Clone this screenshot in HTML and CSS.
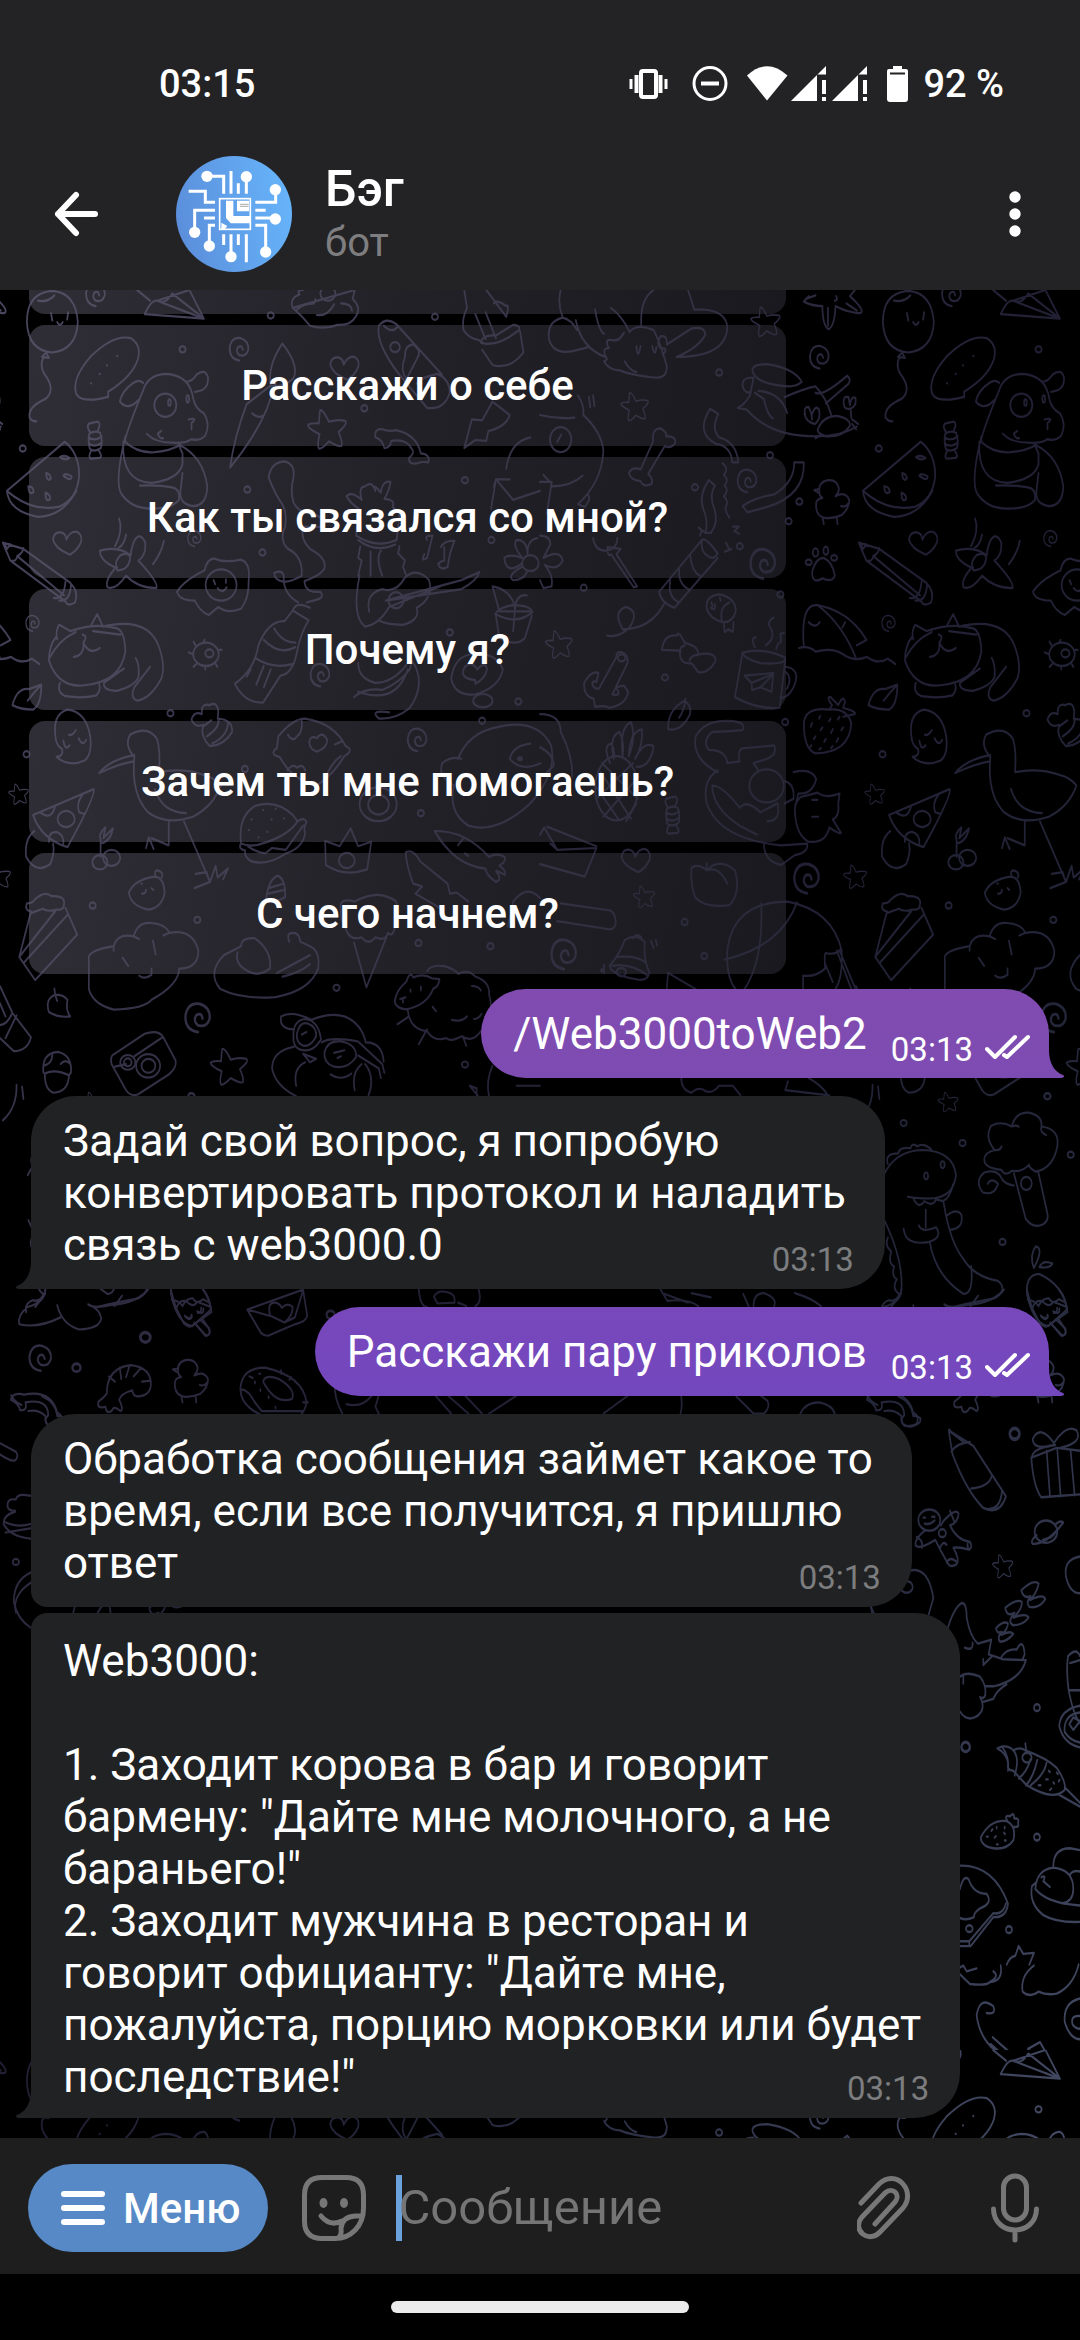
FILE: index.html
```html
<!DOCTYPE html>
<html lang="ru">
<head>
<meta charset="utf-8">
<meta name="viewport" content="width=device-width, initial-scale=1">
<title>Бэг</title>
<link rel="stylesheet" href="styles.css">
</head>
<body>
<div class="app">
  <header class="top">
    <div class="status">
      <span class="clock">03:15</span>
      <svg class="status-icons" width="286" height="40" viewBox="0 0 286 40" aria-hidden="true">
        <g fill="none" stroke="#fff">
          <rect x="12" y="7" width="15" height="26" rx="2" stroke-width="4"/>
          <path d="M7.500 11v18M31.500 11v18" stroke-width="4"/>
          <path d="M2 15v10M37 15v10" stroke-width="3"/>
          <circle cx="81" cy="19.500" r="16" stroke-width="3"/>
          <path d="M72 19.500h18" stroke-width="4"/>
        </g>
        <g fill="#fff">
          <path d="M118 11.500Q138-7 158.500 11.500L138 36.500Z"/>
          <path d="M162 37L197 2v8.500h-9V37ZM193 16h4v14h-4ZM193 33h4v4h-4Z"/>
          <path d="M203 37L238 2v8.500h-9V37ZM234 16h4v14h-4ZM234 33h4v4h-4Z"/>
          <path d="M264 2h9v3h4q2 0 2 2v28q0 3-3 3h-15q-3 0-3-3V7q0-2 2-2h4Z"/>
        </g>
        <path d="M261 9.500h15" stroke="#232325" stroke-width="2"/>
      </svg>
      <span class="battery">92 %</span>
    </div>
    <div class="toolbar">
      <button class="icon-button" aria-label="Назад">
        <svg width="46" height="46" viewBox="0 0 46 46"><path d="M4 23H41M22 4L4 23L22 42" fill="none" stroke="#fff" stroke-width="6" stroke-linecap="round" stroke-linejoin="round"/></svg>
      </button>
      <svg class="avatar" width="116" height="116" viewBox="0 0 348 348" aria-hidden="true">
        <defs><linearGradient id="face" x1="0" y1="0.600" x2="1" y2="0.400"><stop offset="0" stop-color="#5b8edb"/><stop offset="1" stop-color="#66b4fa"/></linearGradient></defs>
        <circle cx="174" cy="174" r="174" fill="url(#face)"/>
        <g fill="none" stroke="#fff" stroke-width="9">
          <path d="M93 61h50v52M165 45v68M187 82v31M211 61v52M38 106h50v33h29M117 163H56v66M84 186h33M117 208H100v64M238 139h61v-37M238 163h31M238 186h60M238 208h31v80M143 235v32M165 235v67M187 235v32M211 235v84"/>
          <rect x="131" y="128" width="92" height="92" stroke-width="5"/>
        </g>
        <g fill="#fff">
          <circle cx="93" cy="61" r="17"/><circle cx="211" cy="62" r="17"/><circle cx="298" cy="101" r="17"/><circle cx="298" cy="189" r="17"/><circle cx="269" cy="288" r="17"/><circle cx="165" cy="302" r="17"/><circle cx="100" cy="270" r="17"/><circle cx="56" cy="229" r="17"/>
          <path d="M150 134h22v46h50v22h-58l-14-16ZM183 134h36v32h-36ZM136 200l18 10-8 10h-10Z"/>
        </g>
        <path d="M192 145h26M192 151h26" stroke="#aaa" stroke-width="3"/>
      </svg>
      <div class="peer">
        <h1 class="peer-name">Бэг</h1>
        <p class="peer-status">бот</p>
      </div>
      <button class="icon-button" aria-label="Ещё">
        <svg width="12" height="46" viewBox="0 0 12 46" fill="#fff"><circle cx="6" cy="6" r="5.700"/><circle cx="6" cy="23" r="5.700"/><circle cx="6" cy="40" r="5.700"/></svg>
      </button>
    </div>
  </header>

  <main class="chat">
    <svg class="wallpaper" width="100%" height="100%" aria-hidden="true">
      <defs>
        <linearGradient id="tint" x1="0" y1="0" x2="1" y2="1">
          <stop offset="0" stop-color="#4a465f"/><stop offset="0.250" stop-color="#363349"/><stop offset="0.500" stop-color="#211f34"/><stop offset="0.700" stop-color="#24263a"/><stop offset="1" stop-color="#444b64"/>
        </linearGradient>
        <ellipse id="o" rx="9" ry="7"/>
        <path id="star" d="M-20-44Q-12-46 5-18Q30-24 52-20Q62-14 33 5Q45 26 42 36Q34 40 5 26Q-16 44-24 42Q-30 36-22 10Q-54-2-56-10Q-50-16-24-14Q-22-40-20-44Z"/>
        <path id="heart" d="M8 26Q-36 12-41-8Q-38-26-18-24Q-4-22-2-8Q8-26 26-26Q46-20 40-2Q30 16 8 26Z"/>
        <path id="swirl" d="M0 28Q-30 24-28-2Q-22-26 4-22Q28-16 26 4Q20 20 0 16Q-12 8-4-2Q8-8 10 4"/>
        <g id="candy"><path d="M-16-8Q-20 10-14 26Q0 34 18 24Q24 10 16-10Q0-16-16-8ZM-18 0Q0 10 20-2M-17 14Q0 24 20 12M-12-10Q-24-22-18-30Q-4-34 2-34Q14-38 14-26L8-12M-10 30Q-20 44-12 48L14 46Q24 44 12 30"/></g>
        <g id="duck"><path d="M-35-22Q-38-44-10-48Q16-50 22-30Q22-20 12-12Q40-24 52-4Q52 16 30 30Q0 40-24 36Q-48 28-44 2Q-40-8-26-8Q-36-14-35-22ZM-35-28L-50-26L-34-18M28 10Q40 14 50 4M-26 34L-22 50M16 36L18 50"/></g>
        <g id="doodles" fill="none" stroke="#fff" stroke-width="5" stroke-linecap="round" stroke-linejoin="round">
          <g transform="scale(0.3444 0.4464)">
            <path d="M152 2Q78 6 78 72Q82 136 152 140Q222 134 226 72Q220 6 152 2ZM110 24Q140 28 158 12M148 52L152 68M198 50L195 66M166 72Q174 84 182 72M134 140L122 150L142 152ZM126 152Q112 172 136 196Q160 226 132 244Q80 262 86 286Q94 296 106 294"/>
            <path d="M310 240Q240 254 222 234Q206 200 262 150Q330 98 380 108Q412 124 400 156Q384 194 314 228L314 240Z"/>
            <path d="M340 148h1M310 169h1M289 188h1M264 209h1"/>
            <path d="M420 54Q440 20 456 24L592 64ZM456 24L550 0L592 64M456 24Q480 34 500 8L592 64M398 0L436 24"/>
            <path d="M416 224Q360 330 364 340Q392 362 440 364Q500 360 524 346M416 224Q430 190 480 188Q552 190 562 246Q568 266 592 276Q612 300 596 326Q580 340 556 334Q540 344 500 342Q450 342 426 322M416 208Q402 198 384 210Q354 226 348 250Q372 272 402 246M540 206Q560 204 570 190Q596 174 604 196Q606 226 566 228M364 328Q332 430 352 456Q380 490 440 490Q500 490 520 470Q524 446 500 442Q460 436 406 438M358 340Q352 430 440 432Q520 424 530 390V366L518 346Q590 372 602 440Q600 484 560 484Q520 480 524 450L530 410M548 290Q566 286 564 292L556 298V312M468 316L458 322Q464 334 474 332"/>
            <ellipse cx="480" cy="258" rx="32" ry="26"/><ellipse cx="492" cy="252" rx="4" ry="7"/><ellipse cx="545" cy="244" rx="4" ry="8"/>
            <use href="#candy" x="275" y="330"/>
            <path d="M20 450L188 340Q230 366 230 416Q224 470 170 486Q100 496 40 462ZM20 450Q26 496 110 508Q180 508 222 450"/>
            <path d="M174 374Q188 368 202 376Q190 384 174 374ZM184 416Q190 408 208 418Q208 430 184 416ZM134 410Q146 412 148 422Q136 432 134 410ZM82 440Q96 440 98 452Q84 462 82 440ZM132 454Q146 458 146 468Q132 478 132 454Z"/>
            <path d="M8 566L30 606L190 698Q196 710 218 700Q230 676 204 656L68 580ZM30 606Q48 610 50 596Q66 590 68 578M50 596L186 684M156 690Q186 694 190 654M172 696Q204 698 206 660M14 568L20 580L30 570Z"/>
            <path d="M346 512Q358 540 334 574M366 548Q360 572 344 578M476 562Q468 590 444 614M380 594Q340 572 290 584Q290 606 336 622Q304 650 312 666Q334 674 366 640Q400 668 454 668Q462 656 402 606Q424 596 422 566Q406 540 390 562Q380 580 380 594ZM340 622Q330 610 350 594Q376 586 378 600Q374 628 340 628Z"/>
            <path d="M164 776Q142 796 142 830Q168 890 240 886Q350 880 364 810Q362 764 340 758Q280 744 204 764L172 750Q160 764 166 782ZM264 752L282 726L298 752M144 824Q170 784 220 766M174 880Q164 902 190 910Q240 916 280 908Q294 896 288 884M298 754Q430 730 462 800Q480 840 470 868Q440 914 400 920Q376 916 390 890L436 844M350 772L270 764M302 880Q298 898 340 898Q390 888 402 868Q406 840 394 824M302 880L360 848M240 772Q256 776 242 790Q260 820 290 802M242 790Q246 818 214 822"/>
            <path d="M514 676Q530 656 570 638L594 628Q602 600 624 602Q650 612 700 604Q728 612 722 650Q724 690 700 714Q660 726 634 710L606 728Q580 720 566 696Q520 696 514 676Z"/>
            <ellipse cx="642" cy="661" rx="45" ry="35"/><path d="M620 650l5 9M656 648v8M632 668Q646 682 658 666"/>
            <path d="M780 420Q786 386 826 384Q858 390 852 420Q842 450 852 476Q866 498 900 500Q944 506 932 530Q900 532 880 530Q870 556 900 580Q950 600 942 624Q930 640 884 652Q886 680 930 676Q946 690 910 696L890 700M780 420Q800 460 820 480Q834 500 828 530Q810 560 836 580Q880 596 876 640Q850 652 826 654Q796 650 796 634Q820 626 824 640Q820 680 866 700"/>
            <path d="M850 718L896 740Q872 770 862 812Q850 860 814 864L764 924Q710 926 682 882Q740 850 750 796Q780 740 826 742L850 718Q860 696 900 712M796 758Q820 790 858 790M766 784Q810 820 858 800M740 824Q790 850 848 838M728 850L716 866M766 842L744 884M786 850L766 890"/>
            <ellipse cx="598" cy="816" rx="37" ry="26"/><ellipse cx="608" cy="814" rx="12" ry="9"/><path d="M560 816L548 812M570 838l-8 6M596 842v8M625 836l6 8M636 806h8M568 796l-6-8M590 790l4-6"/>
            <path d="M820 120Q870 170 852 198Q820 220 786 214Q776 170 820 120ZM786 214L716 256Q680 330 668 398Q740 330 774 268L800 210M732 276Q750 288 762 282"/>
            <path d="M1100 80Q1120 60 1150 76L1284 190M1100 80Q1090 120 1160 190L1240 264Q1290 270 1306 230Q1306 200 1270 188Q1220 196 1210 210M1114 80Q1140 100 1156 80M1176 150Q1174 124 1200 122Q1226 136 1212 152L1180 200Q1160 180 1176 150Z"/><ellipse cx="1147" cy="128" rx="14" ry="11"/>
            <path d="M1348 354L1370 290L1400 292L1430 250L1480 280Q1470 306 1418 316L1412 338L1380 336Z"/>
            <path d="M1090 330Q1086 310 1110 312Q1130 318 1150 314Q1210 324 1222 366Q1250 368 1244 386Q1220 384 1214 388Q1184 392 1188 376Q1206 364 1196 356Q1180 332 1136 338Q1134 354 1116 354Q1110 334 1090 330Z"/>
            <path d="M850 40Q840 18 870 10Q860 0 880 0M1030 0L1024 20Q1050 40 1034 58Q1020 80 980 78Q940 90 900 80Q880 60 850 40ZM862 44Q880 30 912 30L916 20M990 30Q1020 30 1022 46M920 56Q950 60 970 32"/><ellipse cx="952" cy="8" rx="22" ry="16"/>
            <path d="M1348 0L1356 40Q1340 66 1346 90Q1360 108 1390 112L1406 120M1412 0L1470 60Q1480 30 1470 36Q1440 20 1434 30M1380 54L1410 110M1410 50L1440 108M1396 118Q1440 130 1504 92Q1516 80 1490 78L1440 102Q1400 100 1396 118ZM1400 134L1430 168Q1480 180 1520 140L1510 92"/>
            <path d="M1034 550L1042 490Q1020 480 1006 462Q1020 450 1050 470Q1040 440 1060 440Q1080 426 1090 450Q1080 430 1106 454Q1110 426 1134 430Q1130 450 1116 468Q1150 470 1140 486L1160 500L1152 560Q1090 580 1034 550ZM1040 560Q1090 590 1148 570M1046 575L1040 600L1050 606L1040 640M1160 574L1156 590L1176 606L1170 620L1180 640M1076 586V640M1106 584Q1090 600 1110 640M1044 640Q1020 730 1060 754Q1100 750 1130 710L1290 660M1072 720Q1060 680 1110 670Q1150 680 1176 644Q1210 620 1246 650Q1260 690 1210 712Q1220 740 1170 750Q1120 750 1100 740M1120 696L1340 650L1392 632Q1386 650 1340 670Z"/><ellipse cx="1150" cy="695" rx="22" ry="18"/>
            <path d="M1240 560Q1230 550 1256 550L1240 600Q1220 610 1232 592M1280 576Q1290 560 1320 562Q1304 590 1300 620Q1280 630 1272 614Q1280 606 1290 606L1290 576"/>
            <path d="M1028 912Q1060 890 1110 896Q1160 880 1190 850L1196 830Q1240 880 1190 936Q1150 962 1100 960Q1070 940 1130 946M1040 900Q1150 930 1184 850M1040 836Q1040 870 1090 880Q1140 880 1180 840"/>
            <path d="M1310 870Q1320 820 1370 816Q1440 810 1460 850Q1450 890 1380 906Q1320 910 1310 870ZM1380 874Q1330 870 1350 844Q1370 830 1386 850Q1410 830 1414 850Q1410 870 1380 882Z"/><ellipse cx="1402" cy="920" rx="28" ry="15"/>
            <path d="M162 1006Q150 950 196 940Q250 944 262 1000Q268 1040 246 1054Q200 1070 164 1046Q186 1044 180 1028Q164 1020 162 1006ZM184 1010Q190 1034 202 1020M228 1004Q240 1024 250 1008M200 996Q210 1000 220 986"/>
            <path d="M36 930Q50 890 84 894L120 884Q120 930 96 940Q60 940 36 930ZM80 920Q100 900 120 884"/>
            <path d="M390 1046Q360 1020 378 996Q430 974 456 1006Q466 1030 462 1080Q530 1070 590 1086Q620 1090 640 1110Q620 1156 560 1180Q480 1200 430 1170Q380 1130 390 1046ZM390 1042Q320 1052 288 1082Q350 1060 388 1056M450 1118Q470 1170 540 1172M490 1190V1244L440 1228M446 1252L432 1226L424 1250M534 1190L610 1326L564 1340M610 1326L626 1290L632 1316L662 1296L648 1320M606 1320L600 1304L568 1308"/>
            <path d="M556 962Q564 942 586 950Q584 924 608 930Q630 920 634 944L632 960Q676 962 674 990Q650 1020 610 1022Q580 1000 590 974Q566 982 556 962ZM590 978L614 964M600 1000Q640 980 634 960M616 1016Q660 1000 662 970"/>
            <path d="M808 1000Q850 960 886 960Q970 970 1004 1022Q1030 1030 1000 1044Q970 1084 920 1110Q850 1100 812 1046Q780 1040 804 1026ZM836 996Q850 1014 862 1000Q880 990 876 964M972 1018L996 1010M990 1044Q960 1060 944 1096M834 1076Q850 1060 862 1070Q880 1060 886 1076"/><path d="M898 1014Q900 996 920 1004Q936 986 950 1008Q950 1026 920 1034Q900 1030 898 1014Z"/>
            <path d="M96 1176L272 1118Q280 1130 196 1248Q120 1230 96 1176ZM116 1170Q150 1190 160 1156M240 1130Q220 1150 230 1170L246 1174M100 1212Q70 1230 76 1270Q104 1310 146 1286Q160 1260 154 1240M142 1236Q140 1214 164 1214Q186 1220 184 1240"/><ellipse cx="192" cy="1185" rx="25" ry="18"/>
            <path d="M292 1270V1230M292 1230Q284 1220 306 1204L300 1228L328 1206Q320 1236 292 1240"/><ellipse cx="290" cy="1282" rx="22" ry="16"/><ellipse cx="324" cy="1272" rx="25" ry="18"/>
            <path d="M700 1240Q690 1180 740 1156Q800 1140 850 1176L864 1190Q840 1220 770 1238Q730 1250 700 1240ZM864 1190Q884 1180 890 1192Q880 1206 886 1216Q880 1250 830 1262Q780 1290 730 1280Q708 1270 712 1256Q690 1252 700 1240M720 1246Q740 1258 770 1262L790 1250L830 1254L880 1200"/><path d="M764 1165h1M800 1162h1M730 1186h1M788 1186h1M824 1184h1M722 1210h1M776 1214h1M750 1226h1"/>
            <path d="M374 1350Q390 1320 450 1314Q476 1316 478 1350Q470 1384 430 1388Q380 1380 374 1350ZM452 1314Q446 1300 458 1300Q476 1304 470 1316M410 1330h2M440 1340l5 4M412 1352Q422 1354 424 1344"/>
            <path d="M946 1288L944 1234L986 1246L1018 1206L1040 1246L1078 1236L1066 1298Q1000 1316 946 1288Z"/><ellipse cx="1007" cy="1278" rx="23" ry="17"/>
            <path d="M56 1494L90 1392Q70 1390 78 1374Q96 1374 100 1366Q130 1344 150 1358Q190 1356 186 1376Q186 1390 164 1388Q140 1394 124 1386L90 1396M56 1494L102 1546L224 1444L190 1384M56 1494L160 1392M70 1506L196 1400"/>
            <path d="M258 1566V1500Q250 1480 330 1470Q340 1440 388 1448Q400 1414 440 1418Q480 1420 492 1440Q560 1430 576 1480Q576 1520 520 1520Q520 1556 440 1590Q420 1610 330 1612Q270 1600 258 1566ZM330 1470V1480M388 1448L404 1454M444 1458L452 1488M356 1496L372 1514M492 1440L474 1446M404 1536Q420 1546 440 1534V1520"/>
            <path d="M1178 1260Q1200 1250 1220 1280L1300 1330L1306 1352L1326 1350L1360 1370M1178 1260Q1180 1290 1200 1330L1226 1336L1206 1352L1290 1390"/>
            <path d="M1262 1212Q1350 1210 1420 1270Q1440 1260 1466 1270Q1470 1280 1450 1290Q1470 1300 1466 1310Q1440 1300 1440 1302Q1460 1320 1440 1326Q1410 1310 1410 1296Q1320 1290 1262 1212ZM1330 1244L1344 1230M1360 1268L1350 1262"/>
            <path d="M1330 1050Q1360 990 1450 978Q1560 960 1600 1020Q1620 1080 1540 1150Q1440 1220 1360 1200Q1300 1170 1318 1110Q1270 1090 1284 1060Q1310 1044 1340 1050M1480 1050Q1490 1020 1540 1016M1480 1050Q1510 1080 1570 1060"/><ellipse cx="1510" cy="1050" rx="6" ry="3"/>
            <ellipse cx="1098" cy="1152" rx="54" ry="38"/><ellipse cx="1099" cy="1153" rx="30" ry="22"/>
            <path d="M772 1366Q780 1320 806 1312Q830 1320 828 1360Q800 1374 772 1366ZM780 1340L822 1330M778 1352L826 1344"/>
            <path d="M990 1390Q980 1360 1030 1370Q1100 1340 1150 1370Q1160 1390 1146 1430Q1140 1450 1126 1440Q1120 1460 1090 1450Q1070 1470 1050 1450Q1010 1460 1000 1420Q986 1410 990 1390ZM1028 1462L1064 1562L1122 1450"/>
            <path d="M840 1460Q830 1440 850 1440Q870 1440 872 1460L900 1470Q930 1480 924 1520Q900 1570 800 1584Q700 1590 640 1566Q600 1530 650 1490L700 1470Q700 1450 740 1452Q790 1480 784 1520Q750 1540 720 1526Q680 1510 690 1484M804 1530L900 1490M820 1538Q870 1530 900 1510"/>
            <path d="M1474 1426Q1490 1380 1490 1370Q1530 1330 1568 1362M1434 440L1440 424H1480M1426 490L1440 424L1490 470L1568 450M1470 400Q1480 340 1540 330M1430 664L1450 720H1540M1430 664Q1480 670 1496 710L1490 764M1494 714Q1500 680 1530 684M1438 726Q1450 710 1490 706Q1540 706 1546 722Q1500 752 1438 726ZM1440 730L1450 780Q1500 800 1524 780L1544 730"/>
            <ellipse cx="1540" cy="612" rx="24" ry="18"/><path d="M1516 612Q1470 640 1464 600Q1480 590 1516 600Q1486 570 1500 560Q1530 560 1532 592Q1530 560 1560 556M1516 620Q1470 640 1490 650Q1520 650 1530 632"/>
            <use href="#star" transform="translate(950 313)"/><use href="#star" transform="translate(54 1130) scale(0.520)"/>
            <use href="#heart" x="1000" y="175"/><use href="#heart" x="195" y="567"/>
            <use href="#swirl" x="278" y="8"/><use href="#swirl" x="695" y="130"/><use href="#swirl" transform="translate(95 745) scale(0.700)"/><use href="#swirl" transform="translate(565 555) scale(0.700)"/><use href="#swirl" x="930" y="860"/><use href="#swirl" x="1212" y="1005"/>
            <use href="#o" x="530" y="133"/><use href="#o" x="718" y="447"/><use href="#o" x="762" y="588"/><use href="#o" x="1058" y="265"/><use href="#o" x="786" y="57"/><use href="#o" x="1263" y="60"/><use href="#o" x="1350" y="426"/><use href="#o" x="1427" y="560"/><use href="#o" x="1306" y="767"/><use href="#o" x="495" y="948"/><use href="#o" x="77" y="1040"/><use href="#o" x="66" y="355"/><use href="#o" x="711" y="1073"/><use href="#o" x="1400" y="965"/><use href="#o" x="1505" y="922"/><use href="#o" x="1222" y="1172"/><use href="#o" x="269" y="1379"/><use href="#o" x="573" y="1411"/><use href="#o" x="1215" y="1463"/><use href="#o" x="1424" y="1470"/>
          </g>
          <g transform="translate(540) scale(0.3444 0.4464)">
            <path d="M60 0Q50 30 66 62Q20 70 26 110Q40 150 110 134L140 128M66 62Q90 66 108 90M104 68Q120 130 190 150M160 44Q170 90 186 98M206 40Q240 60 260 94Q280 74 330 90Q350 120 368 170Q370 200 330 196Q260 190 232 180Q200 180 186 160Q200 156 190 148Q180 130 200 130Q186 110 206 112Q220 114 230 110L244 96M294 78Q290 20 330 0M430 0L448 44Q540 40 544 84Q540 150 396 150Q460 130 480 100Q478 80 440 86L368 122Q370 100 350 104Q336 120 350 130Q376 130 356 144M280 126Q284 160 292 126M326 126Q334 154 338 128M246 160Q260 180 280 184"/>
            <ellipse cx="60" cy="335" rx="31" ry="28"/><path d="M50 340l12-16M0 280Q50 290 100 286M110 236Q130 260 126 280Q180 320 184 360Q180 430 110 480L130 486Q150 466 140 460M0 430L34 430L20 500M34 440Q90 440 124 416M10 414L28 430M142 240L146 262M154 236L158 260"/>
            <path d="M328 340Q324 310 350 310Q370 318 366 328Q396 326 392 344Q380 356 362 350L314 412Q330 424 324 434Q300 444 292 428Q264 426 258 410Q268 394 292 402Z"/>
            <path d="M494 266L518 278Q496 310 520 330Q570 340 576 386H558Q556 350 510 344Q450 320 494 266ZM530 388Q550 400 534 414Q550 426 536 438Q550 450 534 462Q550 474 538 488Q540 500 550 510"/>
            <path d="M738 386H766Q770 460 660 486L602 498L588 484Q620 466 680 458Q740 430 738 386ZM490 426L508 438Q490 460 506 490Q520 520 496 544H480Q490 520 474 490Q460 460 490 426ZM460 532L480 544M464 550L470 538M560 530L578 530L564 540L578 546M540 566L550 582L536 586L556 580"/>
            <path d="M470 560Q480 552 516 590Q510 600 498 600Q464 590 470 560ZM470 560L346 676Q350 700 390 712L516 600M436 594Q440 630 464 640M404 624Q400 660 436 672M378 650Q370 690 406 700M360 704Q320 760 240 760Q210 720 250 710Q290 720 260 756Q230 780 194 774"/>
            <path d="M154 556Q160 584 190 584Q226 580 224 556M196 576L234 580L222 592L282 664L272 666L206 592Q196 600 196 576ZM0 550Q30 550 30 570L10 600Q60 580 66 606Q50 630 14 616Q40 640 34 664L10 668L0 650"/>
            <path d="M484 712Q480 686 520 682Q570 690 568 720Q560 746 530 744Q490 736 484 712ZM550 700Q520 710 528 740M534 746L536 766L548 760L560 766L562 744M498 700l3 8M522 690l3 6M496 712Q510 720 508 704"/>
            <path d="M354 806Q360 770 398 774Q400 760 420 790L434 794Q460 800 460 816Q510 810 510 830Q490 860 460 856L440 836Q404 840 406 808ZM408 812Q404 800 420 796M434 830Q440 816 460 818"/>
            <path d="M222 822Q220 808 240 812Q258 820 254 836L210 906Q230 910 228 900L220 890L244 886L256 900Q250 930 200 936Q190 930 160 934L156 916Q126 910 128 880Q150 850 170 858L164 878Q150 874 152 884Q160 896 172 892Z"/><ellipse cx="237" cy="824" rx="11" ry="8"/>
            <path d="M590 812Q650 800 712 824Q716 840 640 836Q586 824 590 812ZM588 812L566 912Q630 940 696 936L712 830M714 844Q760 850 736 890Q720 914 698 914M714 856Q734 870 716 894M594 864L678 858L672 900L640 890L616 896L614 880ZM614 880L672 862M640 890L676 862M624 800Q610 780 626 778M656 796Q690 776 664 750Q664 740 678 734M686 804Q690 790 700 788L698 770L708 768"/>
            <path d="M372 984Q370 940 420 920Q440 930 436 950Q410 990 372 984ZM404 958Q420 940 422 916M0 950Q60 950 60 990Q94 1040 94 1090M0 1024Q40 1040 40 1066L20 1080"/>
            <ellipse cx="222" cy="1116" rx="62" ry="72"/><path d="M204 1060Q180 1020 208 1016Q220 1040 214 1050Q200 1000 230 990Q246 1010 240 1044Q230 980 264 968Q280 1000 258 1044Q260 990 296 984Q300 1020 276 1050Q300 1010 330 1022Q320 1070 280 1068M176 1080L264 1184M160 1110L230 1188M180 1060L284 1140M270 1060L164 1140M286 1090L184 1180M280 1150L250 1190"/>
            <use href="#candy" x="384" y="1170"/>
            <path d="M516 1080Q440 1050 452 1000Q480 960 560 966Q600 970 588 986Q540 990 500 990Q470 1010 490 1030Q540 1030 544 1060L580 1056Q570 1024 600 1026L680 1020Q690 1040 660 1050L620 1060L636 1078M516 1076Q470 1100 484 1150Q520 1230 700 1244L776 1240Q780 1260 740 1266L700 1288Q650 1280 650 1240M500 1110Q500 1160 580 1200L630 1220M500 1110Q530 1110 580 1160Q600 1140 640 1170L690 1150Q700 1190 660 1190"/><ellipse cx="658" cy="1111" rx="50" ry="37"/>
            <path d="M710 1100Q740 1106 736 1140L710 1150M736 1080Q790 1070 802 1096Q790 1130 750 1128L740 1160Q740 1220 780 1236Q830 1240 840 1204Q870 1220 874 1216L850 1186Q870 1180 866 1150L870 1128Q830 1140 806 1126L756 1136Q740 1150 740 1160M790 1142h16M790 1180h18"/>
            <path d="M440 1294Q460 1284 484 1300Q520 1270 566 1300Q584 1350 550 1378Q480 1386 450 1360Q436 1330 440 1294ZM484 1300Q520 1290 544 1330M484 1284V1296"/>
            <path d="M12 1204L50 1254L164 1250L130 1314L0 1286M20 1202L164 1246M0 1220L12 1204M50 1254L30 1240"/>
            <path d="M60 1374L204 1390Q220 1396 220 1420Q214 1434 200 1432L50 1414M202 1514Q230 1490 246 1456Q280 1440 304 1460Q300 1500 318 1530Q310 1550 280 1544Q210 1536 202 1514ZM210 1514Q260 1506 314 1536M224 1494Q280 1490 306 1506M270 1452Q280 1440 294 1450M322 1458L330 1474M336 1456L340 1468M186 1512V1530M180 1520V1528M176 1524h1"/><ellipse cx="236" cy="1528" rx="14" ry="9"/>
            <path d="M568 1566Q540 1540 544 1480Q560 1370 720 1370Q850 1390 876 1480Q880 1540 858 1566M642 1374Q650 1500 594 1566M746 1372Q700 1470 536 1500M764 1566V1536Q800 1540 828 1520Q824 1480 832 1486Q860 1490 874 1476M828 1510L850 1550M368 1566L372 1530L452 1566M870 1480L916 1566M862 1480L904 1566"/>
            <path d="M780 14L766 26Q790 36 820 36Q820 80 838 88Q856 80 858 36Q890 50 930 52Q946 46 900 14L914 0M772 20L800 12M836 40V80M890 30L920 46M856 24Q866 24 860 14"/>
            <path d="M618 184Q610 166 660 166Q740 176 760 206Q740 220 700 214Q630 208 618 184ZM620 196L610 236M620 196Q580 196 590 220Q600 234 612 228M610 236Q590 260 574 264L600 268Q660 320 760 326Q860 334 920 306M624 230L650 244Q660 280 676 288M634 226Q700 230 718 276M710 240Q770 220 800 216Q830 240 846 280M800 230Q820 240 892 192Q904 200 896 210L830 254"/>
            <path d="M808 310Q820 284 860 282Q900 286 900 304Q880 330 830 328Q800 320 808 310ZM770 278Q764 262 780 262Q790 276 790 290M790 278Q800 256 810 268Q816 290 798 300Q772 296 768 278M882 254Q880 236 896 240L900 258Q904 236 916 242Q920 262 900 266Q882 268 882 254ZM902 266L904 286M906 290L924 300M906 300L918 312M812 326L800 332"/>
            <use href="#duck" x="846" y="474"/>
            <path d="M790 632Q800 600 824 600Q850 610 856 640Q850 656 820 646Q790 660 790 632Z"/><ellipse cx="780" cy="610" rx="9" ry="6"/><ellipse cx="800" cy="588" rx="8" ry="9"/><ellipse cx="830" cy="584" rx="7" ry="9"/><ellipse cx="854" cy="600" rx="9" ry="6"/>
            <path d="M766 800Q756 700 806 706Q900 720 948 784L920 796M806 706Q880 750 918 826M780 744Q800 760 812 744M886 744L878 756M752 802Q780 796 800 810Q850 800 880 816Q910 834 950 822Q980 840 1010 826L1032 838"/>
            <path d="M766 970Q770 934 840 940Q890 936 904 970Q900 1036 800 1038Q766 1030 766 970ZM840 940L848 930Q830 910 844 912L866 930Q880 906 886 922L880 936Q920 944 914 950L880 956"/><path d="M790 970l-4 8M814 954l-4 6M844 960l-5 6M870 956l-5 6M820 980l-5 6M850 984l-5 8M880 980l-5 6M800 1000l-5 6M830 1006l-5 6M866 1004l-5 8M788 1020l-4 5M816 1026l-5 3M850 1022l-5 4"/>
            <use href="#star" transform="translate(275 262) scale(0.720)"/><use href="#star" transform="translate(655 72) scale(0.760)"/><use href="#star" transform="translate(55 795) scale(0.700)"/><use href="#star" transform="translate(302 1360) scale(0.560)"/><use href="#star" transform="translate(915 1315) scale(0.600)"/>
            <use href="#heart" x="278" y="1278"/>
            <use href="#swirl" x="602" y="425"/><use href="#swirl" transform="translate(648 610) scale(1.300)"/><use href="#swirl" x="812" y="148"/><use href="#swirl" transform="translate(70 1485) scale(1.300)"/><use href="#swirl" transform="translate(775 1315) scale(1.300)"/>
            <use href="#o" x="520" y="185"/><use href="#o" x="450" y="442"/><use href="#o" x="580" y="574"/><use href="#o" x="127" y="667"/><use href="#o" x="363" y="868"/><use href="#o" x="668" y="370"/><use href="#o" x="722" y="518"/><use href="#o" x="753" y="474"/><use href="#o" x="712" y="968"/><use href="#o" x="698" y="682"/><use href="#o" x="420" y="1416"/><use href="#o" x="477" y="1492"/>
          </g>
          <g transform="translate(0 670) scale(0.3444 0.4337)">
            <path d="M158 66L160 80Q130 90 142 120Q170 134 204 130Q190 116 196 92Q186 80 160 80L166 94M0 60L36 122L90 178Q80 210 40 210L0 180M36 122Q20 150 0 150M48 128L16 180M0 100L16 130"/>
            <path d="M126 260Q120 214 170 212Q210 220 206 260Q200 264 200 270Q196 304 156 306Q130 300 130 262Q160 250 200 266M126 244Q150 240 152 220M176 240Q190 226 204 240M8 370Q50 340 48 288M64 292L68 320"/>
            <path d="M326 220L420 170Q460 160 474 178L510 232Q514 248 490 264L400 310Q380 316 366 300L324 240Q320 228 326 220ZM334 246L366 240M390 222L472 178"/><ellipse cx="371" cy="236" rx="22" ry="17"/><ellipse cx="371" cy="236" rx="11" ry="9"/><ellipse cx="430" cy="244" rx="35" ry="27"/><ellipse cx="431" cy="244" rx="20" ry="16"/>
            <path d="M854 160Q810 160 816 130Q850 116 904 138Q960 120 1000 130Q1050 146 1062 190Q1110 190 1114 234M854 200Q790 210 790 250Q800 290 860 314M886 236Q850 250 860 290M852 176Q850 140 886 136Q926 140 932 184L920 196Q900 214 870 206Q850 200 852 176ZM862 170Q870 142 892 146Q920 154 918 176Q900 204 876 196Q860 190 862 170ZM934 190Q960 176 1040 188L1110 240L1116 260M1040 220L1100 250L1106 272M942 214Q950 184 990 188Q1036 194 1034 224Q1010 252 970 246Q940 238 942 214ZM880 216L918 228L900 236ZM1050 240Q1020 260 1030 300M1060 240Q1090 270 1070 312M960 264Q990 280 1020 262M876 172L890 166M970 214L1000 208M980 226L990 222"/>
            <path d="M1146 96Q1150 70 1180 50Q1190 24 1200 40Q1230 30 1254 42L1276 44Q1274 62 1258 66Q1240 104 1180 114Q1150 112 1146 96ZM1162 90L1178 86M1170 98V92M1192 68v5M1222 62v8M1240 26Q1250 10 1290 14Q1320 20 1330 32Q1360 20 1380 38Q1424 50 1420 80Q1440 130 1390 170Q1370 190 1340 176Q1310 190 1296 180Q1260 190 1240 164Q1190 160 1184 116M1154 148L1184 132M1216 194L1240 160M1344 176L1354 198M1312 138Q1340 144 1356 130M1256 108L1266 118M1370 60Q1390 60 1396 70M1376 136Q1390 136 1398 124"/>
            <path d="M132 760Q130 790 80 800Q50 820 56 840Q110 850 176 824M126 770Q120 786 100 786M98 784Q70 790 76 812M166 796Q180 840 230 852Q290 850 294 826Q290 804 256 794Q270 804 320 796Q400 790 430 760"/>
            <path d="M496 760L510 800L534 838Q550 850 560 842L614 812Q610 780 590 760M502 784Q520 786 530 798Q540 780 560 780Q570 796 590 782L608 790M564 836L596 866Q614 866 608 850L582 830M542 824Q560 830 556 818M574 814Q586 814 584 802"/>
            <path d="M718 806L880 760L892 820Q890 834 856 840L780 866Q770 868 758 860ZM718 806L790 822L826 836L856 824L880 762M784 820Q776 790 796 790Q812 790 818 802Q834 788 850 800Q850 820 826 836"/>
            <path d="M286 1018Q300 1010 310 1000Q310 940 380 934Q440 940 438 980Q436 1004 404 1006Q386 1008 384 992Q350 1000 346 1014Q360 1036 350 1040Q330 1026 326 1038Q310 1050 306 1030Q280 1036 286 1018ZM316 960L334 972M348 940L352 966M376 936L366 962M410 940L388 960M438 970L412 972"/>
            <use href="#duck" x="552" y="970"/>
            <path d="M698 990Q700 940 770 940Q880 960 890 1020Q880 1070 800 1060Q700 1040 698 990ZM764 972Q770 954 810 966Q860 990 848 1012Q800 1026 764 972ZM700 990Q720 990 740 1020L760 1040L880 1040M724 960l10 4M740 972v4M756 990v4M780 1006v4M800 1030v4M816 946v8M840 968l6-6M880 1020h14M752 954h4"/>
            <path d="M32 1014Q36 996 70 1002Q150 990 166 1044Q186 1050 176 1070Q160 1076 140 1074Q124 1060 140 1050Q140 1010 74 1020Q80 1040 58 1038Q56 1024 32 1014ZM0 1114L46 1134Q56 1144 44 1154Q30 1156 0 1140"/>
            <path d="M22 1260Q20 1240 46 1244Q50 1230 76 1234L96 1236M22 1260Q24 1270 44 1270M44 1272Q10 1280 10 1300Q30 1330 90 1334M14 1296Q50 1310 92 1300M16 1320L92 1310M40 1480Q40 1430 90 1412M40 1480Q50 1520 90 1540M1100 1004L1090 1030L1100 1046M972 980Q970 1010 994 1046M1006 1024Q1050 1034 1080 1004M1264 1004L1310 1046M1300 1004L1360 1046M1350 1004L1400 1046M1420 1046L1500 1004"/>
            <path d="M1216 760Q1220 800 1240 800M1260 776Q1270 760 1300 766Q1324 770 1320 790L1270 792ZM1330 790L1354 798M1390 760Q1400 790 1380 798M1364 290L1390 316M1364 290L1384 296V314M1420 314Q1410 280 1430 244M1500 290H1568"/>
            <use href="#star" transform="translate(665 247) scale(0.960)"/><use href="#swirl" transform="translate(575 130) scale(1.300)"/><use href="#swirl" transform="translate(118 915) scale(1.150)"/>
            <use href="#o" x="977" y="64"/><use href="#o" x="1350" y="241"/><use href="#o" transform="translate(422 870) scale(1.600)"/><use href="#o" transform="translate(222 940) scale(1.300)"/><use href="#o" transform="translate(960 818) scale(1.300)"/><use href="#o" x="46" y="1388"/><use href="#o" x="556" y="314"/>
          </g>
          <g transform="translate(540 670) scale(0.3444 0.4337)">
            <path d="M1290 460Q1290 444 1320 438Q1290 410 1310 382Q1340 370 1370 384Q1380 350 1420 352Q1460 360 1456 384Q1510 390 1502 430Q1490 480 1440 488Q1420 480 1420 472Q1400 490 1370 486Q1350 500 1340 484Q1290 480 1290 460ZM1370 384Q1384 380 1390 384M1456 384Q1450 396 1470 404M1320 438Q1336 440 1340 430M1376 492L1410 596Q1430 620 1460 610Q1480 600 1472 580L1446 486M1376 520Q1350 516 1342 506Q1330 480 1290 490Q1260 510 1286 536Q1320 544 1330 516Q1310 500 1300 516"/><ellipse cx="1412" cy="515" rx="16" ry="15"/>
            <path d="M998 496Q1030 440 1110 438Q1200 440 1208 496Q1200 550 1130 550Q1090 550 1068 546M1010 470Q1000 446 1040 446Q1044 430 1076 434Q1080 420 1096 430Q1110 420 1136 436M1084 550Q1100 576 1116 556Q1140 570 1150 552L1170 556Q1190 550 1200 516M1172 560Q1190 650 1230 690Q1260 730 1330 740Q1360 760 1320 780Q1250 790 1200 800M1132 652Q1150 730 1230 770Q1260 770 1252 706M1120 576V616M1100 612Q1110 630 1150 616Q1170 640 1130 650Q1060 660 1056 620M1180 590Q1210 570 1224 588Q1230 620 1190 622M1000 600Q1060 700 1048 770L1020 800M1010 640Q1000 660 1020 672Q1010 700 1028 706Q1020 730 1036 736Q1020 760 1044 770M1272 774L1250 798"/><ellipse cx="1121" cy="498" rx="6" ry="8"/><ellipse cx="1169" cy="472" rx="6" ry="8"/>
            <path d="M1434 710Q1420 680 1440 660Q1464 666 1434 710ZM1450 708Q1460 690 1488 700Q1480 712 1450 708ZM1414 770Q1410 724 1450 724Q1520 750 1530 806L1476 844Q1440 840 1420 790ZM1416 782L1430 802Q1440 780 1460 788Q1480 804 1490 788L1530 800M1454 820Q1470 836 1474 820M1490 810Q1510 820 1508 804M1486 840L1516 866Q1530 866 1524 850L1506 828"/>
            <path d="M410 272Q410 300 440 306Q460 290 480 302Q500 310 520 290L560 290L582 312M720 280L712 300L840 312M780 272Q820 290 836 312M350 760L370 786Q430 780 460 798M362 770L430 790M440 768L496 778M590 770L606 798M620 798Q620 768 650 768Q690 780 680 798M740 768Q790 780 816 798"/>
            <path d="M184 1046L256 1004M410 1006Q414 1030 408 1046M570 1006L620 1046H650Q670 1030 660 1016L640 1004M756 1046Q770 1020 810 1020Q850 1026 856 1046M950 1004Q960 1020 980 1026M1000 1040Q1030 1036 1050 1052Q1044 1074 1076 1076Q1110 1070 1104 1056Q1090 1050 1084 1052Q1080 1020 1040 1006"/>
            <use href="#star" transform="translate(1185 328) scale(0.520)"/>
            <use href="#o" x="1056" y="376"/><use href="#o" x="1227" y="422"/><use href="#o" x="1343" y="650"/><use href="#o" x="1541" y="449"/><use href="#o" x="1473" y="314"/>
          </g>
          <g transform="translate(780 1090) scale(0.3333 0.4847)">
            <path d="M506 104L518 154Q560 230 610 264Q660 280 678 240L580 136ZM506 104L548 126M514 148Q530 130 570 128M574 224Q630 220 636 196M618 266Q660 270 666 230M508 102L516 110"/>
            <ellipse cx="448" cy="289" rx="33" ry="22"/><path d="M482 300Q490 290 500 284Q530 264 536 276Q534 294 510 300Q530 330 570 334Q580 346 566 350Q540 344 520 346Q540 370 530 380Q510 390 500 374Q480 350 466 330Q420 350 408 342Q400 330 436 310M510 270L522 290M410 324Q430 330 426 346M500 376Q510 364 528 374M564 334Q560 346 568 350M434 296Q450 300 464 290M430 284h6M456 282h8M480 346Q490 330 500 340"/><ellipse cx="487" cy="316" rx="11" ry="8"/>
            <path d="M754 160L830 140L900 146M754 160Q760 220 784 242L900 236M800 146L810 240M832 144L842 240M872 146L884 238M822 134Q760 146 758 122Q780 90 822 130Q860 90 890 104Q910 130 840 140M756 158Q760 140 826 134"/>
            <ellipse cx="798" cy="313" rx="34" ry="23"/><path d="M770 320Q750 332 758 338Q800 340 850 294Q840 288 826 298M788 330Q820 326 830 310"/>
            <path d="M724 434Q760 410 776 420Q770 440 750 454Q790 440 796 452Q780 472 748 468Q736 460 752 446Q730 452 724 434ZM676 470Q710 450 726 458Q726 474 700 490Q740 480 746 490Q730 506 700 506Q680 500 704 480Q680 490 676 470ZM648 512Q670 496 684 502Q684 514 664 526Q690 516 700 524Q680 540 660 540Q650 530 666 520Q650 524 648 512Z"/>
            <path d="M500 520Q520 470 546 460Q560 460 560 490Q570 530 594 544L634 536L626 566L668 576L738 578Q720 620 640 632L614 632M554 552Q580 560 578 542M610 576V588L636 570M664 572Q680 554 710 556Q730 530 734 566L728 576M540 612Q560 600 600 612Q620 630 616 650Q610 660 600 654Q620 680 590 694Q560 706 540 684M550 626V610M610 664L640 658Q650 640 680 628"/>
            <path d="M652 760Q680 750 700 764Q720 756 736 764Q800 780 830 800Q860 830 854 846Q820 870 740 836L700 806Q680 806 684 790Q680 770 652 760ZM666 756Q690 780 684 806M700 764Q720 780 704 816M752 782Q740 810 716 822M772 784Q760 820 738 836M800 784Q800 810 752 836M736 750L740 770M854 840L900 872M838 856L900 880M806 806l4 3M830 810l4 3M798 824h6M820 830l3 3M776 836h6M810 846l4-3M836 828l3-3"/><ellipse cx="741" cy="779" rx="14" ry="10"/>
            <path d="M602 944Q630 906 680 910Q710 920 700 950Q680 970 640 966Q604 962 602 944ZM684 912Q670 896 690 900Q704 890 702 904Q720 904 714 914Q720 924 700 922M634 930l4-3M650 922v3M674 922v3M644 944l4-3M672 934l3 3M620 942h4M650 958h4M674 950h4"/>
            <path d="M540 1002Q640 1000 684 1080Q680 1110 640 1108L572 1168H540M540 1158H568L640 1100Q670 1104 678 1080M568 1158V1168M540 1050Q550 1020 566 1030Q580 1060 620 1060Q640 1080 600 1090Q580 1100 582 1108Q560 1116 540 1110"/><ellipse cx="568" cy="1132" rx="10" ry="7"/>
            <path d="M820 1004Q820 966 870 966L900 970M766 1050Q770 1010 820 1006Q880 1010 880 1050Q880 1076 846 1080M766 1050Q800 1080 900 1084M756 1044Q746 1080 790 1104Q830 1120 900 1118M870 1020Q880 1010 900 1014M784 1026Q800 1020 790 1034L810 1046M756 1044L770 1036"/>
            <path d="M540 1226Q560 1240 570 1246Q620 1250 630 1242Q670 1240 662 1208M540 1212L550 1208L560 1220L590 1214M630 1242Q660 1230 640 1220M762 1208Q720 1230 728 1262Q750 1276 776 1262Q800 1270 830 1266Q880 1250 896 1206M680 1206Q690 1190 706 1188L716 1168L730 1184L762 1182L748 1206"/>
            <path d="M620 1306Q650 1310 640 1292Q600 1270 590 1310Q600 1370 678 1398M638 1356L684 1384M632 1370L678 1398M660 1432L696 1400Q730 1408 750 1390L744 1380L780 1366L842 1440ZM696 1400L842 1440M744 1380L842 1440"/>
            <path d="M900 364Q850 370 858 406Q870 440 900 440M864 570Q890 550 900 570M864 570Q858 600 866 640Q880 690 900 708M870 584L900 578M866 640H900M900 672Q840 680 838 714Q850 750 900 758M900 686Q850 690 854 726Q870 744 900 748M868 710L880 696L900 704L880 722ZM900 1276Q850 1284 854 1324Q870 1360 900 1360M900 1312Q870 1310 878 1330Q890 1340 900 1338M276 480Q260 440 340 410Q440 360 460 450L446 484"/><ellipse cx="380" cy="427" rx="18" ry="12"/>
            <use href="#star" transform="translate(668 385) scale(0.550)"/>
            <use href="#o" transform="translate(704 111) scale(1.600)"/><use href="#o" transform="translate(557 757) scale(1.400)"/><use href="#o" x="771" y="676"/><use href="#o" x="771" y="943"/><use href="#o" x="687" y="1134"/>
          </g>
        </g>
        <pattern id="paper" width="856" height="1760" patternUnits="userSpaceOnUse">
          <use href="#doodles"/><use href="#doodles" x="-856"/><use href="#doodles" x="856"/><use href="#doodles" y="-1760"/>
        </pattern>
        <mask id="lines" maskUnits="userSpaceOnUse" x="0" y="0" width="100%" height="100%"><rect width="100%" height="100%" fill="url(#paper)"/></mask>
      </defs>
      <rect width="100%" height="100%" fill="url(#tint)" mask="url(#lines)"/>
    </svg>

    <div class="keyboard">
      <div class="key-tail"></div>
      <button class="key">Расскажи о себе</button>
      <button class="key">Как ты связался со мной?</button>
      <button class="key">Почему я?</button>
      <button class="key">Зачем ты мне помогаешь?</button>
      <button class="key">С чего начнем?</button>
    </div>

    <article class="bubble out out-first">
      <p class="text">/Web3000toWeb2</p>
      <time class="time">03:13</time>
      <svg class="checks" width="46" height="26" viewBox="0 0 46 26" aria-label="Прочитано"><path d="M2 15l8 8L30 3M19 21l3 2L43 3" fill="none" stroke="#fff" stroke-width="4" stroke-linecap="round" stroke-linejoin="round"/></svg>
      <svg class="tail" width="15" height="28" viewBox="0 0 15 28" aria-hidden="true"><path d="M0 0C0 14 6 22 14 25C16 26 15 28 12 28H0Z" fill="#7d4cb2"/></svg>
    </article>

    <article class="bubble in">
      <p class="text">Задай свой вопрос, я попробую<br>конвертировать протокол и наладить<br>связь с web3000.0</p>
      <time class="time">03:13</time>
      <svg class="tail" width="15" height="28" viewBox="0 0 15 28" aria-hidden="true"><path d="M15 0C15 14 9 22 1 25C-1 26 0 28 3 28H15Z" fill="#212224"/></svg>
    </article>

    <article class="bubble out out-second">
      <p class="text">Расскажи пару приколов</p>
      <time class="time">03:13</time>
      <svg class="checks" width="46" height="26" viewBox="0 0 46 26" aria-label="Прочитано"><path d="M2 15l8 8L30 3M19 21l3 2L43 3" fill="none" stroke="#fff" stroke-width="4" stroke-linecap="round" stroke-linejoin="round"/></svg>
      <svg class="tail" width="15" height="28" viewBox="0 0 15 28" aria-hidden="true"><path d="M0 0C0 14 6 22 14 25C16 26 15 28 12 28H0Z" fill="#7347be"/></svg>
    </article>

    <div class="group">
      <article class="bubble in joined-below">
        <p class="text">Обработка сообщения займет какое то<br>время, если все получится, я пришлю<br>ответ</p>
        <time class="time">03:13</time>
      </article>
      <article class="bubble in joined-above">
        <p class="text">Web3000:<br><br>1. Заходит корова в бар и говорит<br>бармену: "Дайте мне молочного, а не<br>бараньего!"<br>2. Заходит мужчина в ресторан и<br>говорит официанту: "Дайте мне,<br>пожалуйста, порцию морковки или будет<br>последствие!"</p>
        <time class="time">03:13</time>
        <svg class="tail" width="15" height="28" viewBox="0 0 15 28" aria-hidden="true"><path d="M15 0C15 14 9 22 1 25C-1 26 0 28 3 28H15Z" fill="#212224"/></svg>
      </article>
    </div>
  </main>

  <footer class="composer">
    <button class="menu">
      <svg width="46" height="36" viewBox="0 0 46 36" aria-hidden="true"><path d="M4 4H42M4 18H42M4 32H42" stroke="#fff" stroke-width="6" stroke-linecap="round"/></svg>
      Меню
    </button>
    <button class="icon-button sticker" aria-label="Стикеры">
      <svg width="66" height="68" viewBox="0 0 66 68" fill="none" stroke="#777" stroke-width="5" stroke-linecap="round" stroke-linejoin="round"><path d="M21 3.500H45Q62.500 3.500 62.500 21V34C62.500 52 50 64.500 34 64.500H21Q3.500 64.500 3.500 47V21Q3.500 3.500 21 3.500ZM60 42H54Q41 43 40 54Q41 62 37 64M20 42Q29 53 41 47"/><g fill="#777" stroke="none"><ellipse cx="22.500" cy="29" rx="4" ry="5"/><ellipse cx="43" cy="29" rx="4" ry="5"/></g></svg>
    </button>
    <div class="field">
      <span class="caret"></span>
      <input class="message-input" type="text" placeholder="Сообщение" aria-label="Сообщение">
    </div>
    <button class="icon-button clip" aria-label="Прикрепить">
      <svg width="54" height="66" viewBox="0 0 54 66" fill="none" stroke="#777" stroke-width="5" stroke-linecap="round" stroke-linejoin="round"><path d="M4 28L22 9C39-7 60 16 46 33L24 56C12 70-6 55 5 42L28 18C36 11 44 20 38 27L18 49"/></svg>
    </button>
    <button class="icon-button mic" aria-label="Голосовое сообщение">
      <svg width="48" height="70" viewBox="0 0 48 70" fill="none" stroke="#777" stroke-width="5" stroke-linecap="round"><rect x="12.500" y="3" width="23" height="44" rx="11.500"/><path d="M2.500 36C3 64 45 64 45.500 36M24 58V67"/></svg>
    </button>
  </footer>
  <div class="system-nav"><span class="handle"></span></div>
</div>
</body>
</html>
```
FILE: styles.css
```css
* { box-sizing: border-box; }

body {
  margin: 0;
  background: #000;
  color: #fff;
  font-family: Roboto, "Noto Sans", sans-serif;
}

h1, p { margin: 0; }

button {
  margin: 0;
  padding: 0;
  border: 0;
  background: none;
  color: inherit;
  font: inherit;
}

svg { display: block; flex: none; }

.app {
  display: flex;
  flex-direction: column;
  min-height: 100vh;
}

/* Status bar and chat header */
.top {
  position: relative;
  z-index: 1;
  background: #232325;
}

.status {
  display: flex;
  align-items: center;
  height: 138px;
  padding: 62px 76px 32px 159px;
  font-size: 38px;
  font-weight: 500;
  line-height: 44px;
}

.status-icons { margin: 0 8px 0 auto; }

.toolbar {
  display: flex;
  align-items: center;
  height: 152px;
  padding: 0 59px 0 54px;
}

.icon-button { flex: none; }

.avatar { margin-left: 76px; }

.peer {
  flex: 1;
  padding: 0 32px 2px 33px;
}

.peer-name {
  font-size: 50px;
  font-weight: 500;
  line-height: 60px;
}

.peer-status {
  color: #7e7e80;
  font-size: 40px;
  line-height: 48px;
}

/* Conversation */
.chat {
  position: relative;
  flex: 1;
  display: flex;
  flex-direction: column;
  justify-content: flex-end;
  gap: 18px;
  padding: 0 31px 20px;
  overflow: hidden;
}

.wallpaper {
  position: absolute;
  inset: 0;
}

.keyboard {
  position: relative;
  display: flex;
  flex-direction: column;
  gap: 11px;
  width: 757px;
  max-width: 100%;
  margin: 0 0 -3px -2px;
}

.key,
.key-tail {
  border-radius: 16px;
  background-image: linear-gradient(100deg, rgba(94, 90, 106, 0.5), rgba(68, 66, 80, 0.5) 50%, rgba(50, 50, 62, 0.5));
}

.key {
  height: 121px;
  font-size: 42px;
  font-weight: 500;
  line-height: 48px;
}

.key-tail {
  height: 24px;
  border-radius: 0 0 16px 16px;
}

.bubble {
  position: relative;
  width: fit-content;
  max-width: 100%;
  padding: 19px 32px 18px;
  border-radius: 45px;
}

.text {
  font-size: 44px;
  line-height: 52px;
}

.time {
  font-size: 33px;
  line-height: 38px;
}

.tail {
  position: absolute;
  bottom: 0;
}

.in {
  display: grid;
  padding-right: 39px;
  border-bottom-left-radius: 0;
  background: #212224;
}

.in .text,
.in .time {
  grid-area: 1 / 1;
}

.in .time {
  align-self: end;
  justify-self: end;
  margin: 0 -8px -8px 0;
  color: #7c7d7f;
}

.in .tail { right: 100%; }

.out {
  display: flex;
  align-items: flex-end;
  align-self: flex-end;
  padding-right: 18px;
  border-bottom-right-radius: 0;
}

.out .text { margin-right: 24px; }

.out .time { margin-bottom: -9px; }

.out .tail { left: 100%; }

.out-first { background: linear-gradient(#814bb0, #7d4cb2); }

.out-second { background: linear-gradient(#7848bb, #7347be); }

.checks { margin-left: 12px; }

.group {
  display: flex;
  flex-direction: column;
  gap: 6px;
}

.joined-below { border-bottom-left-radius: 16px; }

.joined-above {
  padding-top: 22px;
  padding-bottom: 15px;
  border-top-left-radius: 16px;
}

.joined-above .time { margin-bottom: -5px; }

/* Message field */
.composer {
  position: relative;
  display: flex;
  align-items: center;
  height: 136px;
  padding: 4px 41px 0 28px;
  background: #1e1e1e;
}

.menu {
  display: flex;
  align-items: center;
  gap: 17px;
  height: 88px;
  padding: 0 28px 0 32px;
  border-radius: 44px;
  background: #5789c6;
  font-size: 42px;
  font-weight: 500;
}

.sticker { margin-left: 33px; }

.field {
  display: flex;
  flex: 1;
  align-items: center;
  min-width: 0;
  padding-left: 29px;
}

.caret {
  flex: none;
  width: 6px;
  height: 66px;
  background: #6ba2dd;
}

.message-input {
  flex: 1;
  min-width: 0;
  margin-left: -4px;
  padding: 0;
  border: 0;
  outline: 0;
  background: none;
  color: #fff;
  font: 49px/60px Roboto, "Noto Sans", sans-serif;
}

.message-input::placeholder {
  color: #757575;
  opacity: 1;
}

.mic { margin-left: 80px; }

.system-nav {
  display: flex;
  align-items: center;
  justify-content: center;
  height: 66px;
}

.handle {
  width: 298px;
  height: 12px;
  border-radius: 6px;
  background: #ebebeb;
}
```
